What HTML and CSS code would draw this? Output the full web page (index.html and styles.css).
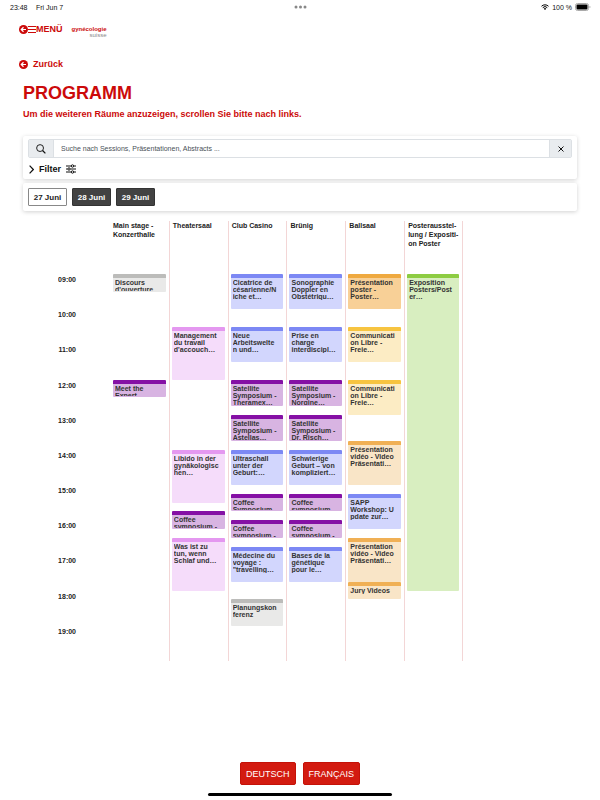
FILE: index.html
```html
<!DOCTYPE html>
<html lang="de">
<head>
    <meta charset="UTF-8">
    <meta name="viewport" content="width=device-width, initial-scale=1.0">
    <title>Programm - gynécologie suisse</title>
    <link rel="stylesheet" href="styles.css">
</head>
<body>
    <div class="status-bar">
        <span class="status-time">23:48</span>
        <span>Fri Jun 7</span>
        <svg class="status-dots" viewBox="0 0 13 4" width="13" height="4"><circle cx="2" cy="2" r="1.5"/><circle cx="6.5" cy="2" r="1.5"/><circle cx="11" cy="2" r="1.5"/></svg>
        <div class="status-right">
            <svg viewBox="0 0 16 12" width="8" height="6" fill="none" stroke="#000" stroke-width="2"><path d="M1 4.5a10 10 0 0 1 14 0M3.5 7.3a6.3 6.3 0 0 1 9 0"/><path d="M8 12L5.500 9.500a3.500 3.500 0 0 1 5 0z" fill="#000" stroke="none"/></svg>
            <span>100 %</span>
            <svg viewBox="0 0 16 8" width="16" height="8"><rect x=".5" y=".5" width="13" height="7" rx="2" fill="#fff" stroke="#aaa"/><rect x="1.500" y="1.500" width="11" height="5" rx="1"/><path d="M14.500 2.700v2.600q1-.4 1-1.300t-1-1.300z" fill="#aaa"/></svg>
        </div>
    </div>

    <header>
        <button class="menu-button">
            <svg viewBox="0 0 18 18" width="9" height="9"><circle cx="9" cy="9" r="9" fill="#cc0a0a"/><path d="M14 9H5M9 4.500L4.500 9 9 13.500" fill="none" stroke="#fff" stroke-width="2.400"/></svg>
            <svg viewBox="0 0 8 8" width="8" height="8"><path d="M0 1.500h8M0 4.500h8M0 7.500h8" stroke="#cc0a0a"/></svg>
            <span>MENÜ</span>
        </button>
        <a href="#" class="logo"><strong>gynécologie</strong><span>suisse</span></a>
    </header>

    <a href="#" class="back-link">
        <svg viewBox="0 0 18 18" width="9" height="9"><circle cx="9" cy="9" r="9" fill="#cc0a0a"/><path d="M14 9H5M9 4.500L4.500 9 9 13.500" fill="none" stroke="#fff" stroke-width="2.400"/></svg>
        Zurück
    </a>

    <main>
        <h1>PROGRAMM</h1>
        <p class="hint">Um die weiteren Räume anzuzeigen, scrollen Sie bitte nach links.</p>

        <div class="card search-card">
            <form class="search">
                <button type="button" aria-label="Suchen"><svg viewBox="0 0 16 16" width="10" height="10" fill="none" stroke="#111" stroke-width="1.500"><circle cx="6.500" cy="6.500" r="5.500"/><path d="M10.500 10.500L15 15" stroke-width="2"/></svg></button>
                <input type="text" aria-label="Suche" placeholder="Suche nach Sessions, Präsentationen, Abstracts ...">
                <button type="reset" aria-label="Löschen"><svg viewBox="0 0 6 6" width="6" height="6"><path d="M.5.5l5 5M5.500.5l-5 5" stroke="#111" stroke-width="1"/></svg></button>
            </form>
            <button class="filter-button">
                <svg viewBox="0 0 5 9" width="5" height="9" fill="none" stroke="#111" stroke-width="1.200"><path d="M.6.6l3.700 3.900L.6 8.400"/></svg>
                Filter
                <svg viewBox="0 0 10 10" width="10" height="10" fill="none" stroke="#111"><path d="M0 2h5M8 2h2M0 5h1.500M4.500 5H10M0 8h5M8 8h2"/><circle cx="6.500" cy="2" r="1.200"/><circle cx="3" cy="5" r="1.200"/><circle cx="6.500" cy="8" r="1.200"/></svg>
            </button>
        </div>

        <div class="card days">
            <button class="day active">27 Juni</button>
            <button class="day">28 Juni</button>
            <button class="day">29 Juni</button>
        </div>

        <div class="schedule" id="schedule">
            <div class="room">
                <h2></h2>
                <div class="hours" id="hours"></div>
            </div>
        </div>
    </main>

    <footer>
        <div class="languages">
            <button>DEUTSCH</button>
            <button>FRANÇAIS</button>
        </div>
        <div class="home-bar"></div>
    </footer>

    <script src="schedule.js"></script>
</body>
</html>
```

FILE: styles.css
```css
* {
    box-sizing: border-box;
}
body {
    font-family: "Liberation Sans", Arial, sans-serif;
    margin: 0;
    min-height: 100vh;
    display: flex;
    flex-direction: column;
    background-color: #fff;
    color: #222;
}
button, input {
    font-family: inherit;
    margin: 0;
}
button {
    cursor: pointer;
}
svg {
    display: block;
    flex: none;
}
a {
    text-decoration: none;
}
.status-bar {
    display: grid;
    grid-template-columns: 26px 1fr auto 1fr;
    align-items: center;
    padding: 0 9px 0 10px;
    height: 14px;
    font-size: 7px;
    color: #111;
}
.status-dots {
    fill: #888;
    margin-right: 26px;
}
.status-right {
    display: flex;
    align-items: center;
    justify-content: flex-end;
    gap: 3px;
}
header {
    display: flex;
    align-items: center;
    gap: 9px;
    height: 30px;
    padding-left: 19px;
}
.menu-button {
    display: flex;
    align-items: center;
    padding: 0;
    border: 0;
    background: none;
    color: #cc0a0a;
    font-size: 9px;
    font-weight: bold;
}
.logo {
    display: flex;
    flex-direction: column;
    align-items: flex-end;
    padding-top: 6px;
    font-size: 6px;
    line-height: 6px;
    color: #888;
}
.logo strong {
    color: #cc0a0a;
}
.back-link {
    display: flex;
    align-items: center;
    gap: 5px;
    margin: 14px 19px 0;
    line-height: 12px;
    font-size: 9px;
    font-weight: bold;
    color: #cc0a0a;
}
main {
    padding: 0 23px;
}
h1 {
    margin: 12px 0 0;
    font-size: 18px;
    line-height: 22px;
    color: #cc0a0a;
}
.hint {
    margin: 4px 0 16px;
    font-size: 9px;
    line-height: 12px;
    font-weight: bold;
    color: #cc0a0a;
}
.card {
    margin-bottom: 4px;
    padding: 3px 5px;
    border-radius: 2px;
    background-color: #fff;
    box-shadow: 0 1px 4px rgba(0, 0, 0, 0.18);
}
.search {
    display: flex;
    height: 19px;
    border: 1px solid #dce0e4;
    border-radius: 2px;
}
.search button {
    display: flex;
    align-items: center;
    justify-content: center;
    width: 24px;
    padding: 0;
    border: 0;
    background-color: #e9ecef;
}
.search button:last-child {
    width: 21px;
}
.search input {
    flex: 1;
    min-width: 0;
    padding: 0 7px;
    border: 0;
    border-left: 1px solid #dce0e4;
    border-right: 1px solid #dce0e4;
    font-size: 7px;
}
.search input::placeholder {
    color: #495057;
}
.filter-button {
    display: flex;
    align-items: center;
    gap: 5px;
    height: 14px;
    margin-top: 4px;
    padding: 0 1px;
    border: 0;
    background: none;
    font-size: 9px;
    font-weight: bold;
    color: #111;
}
.days {
    display: flex;
    gap: 5px;
    padding: 5px;
}
.day {
    width: 39px;
    height: 18px;
    padding: 0;
    border: 1px solid #333;
    border-radius: 1px;
    background-color: #424242;
    color: #fff;
    font-size: 8px;
    font-weight: bold;
}
.day.active {
    background-color: #fff;
    border-color: #888;
    color: #222;
}
.schedule {
    display: grid;
    grid-template-columns: 87px repeat(6, minmax(0, 1fr));
    margin: 10px 114px 0 0;
}
.room + .room + .room {
    border-left: 1px solid #f3d6d6;
}
.room:last-child {
    border-right: 1px solid #f3d6d6;
}
.room h2 {
    height: 53px;
    margin: 0;
    padding: 0 3px;
    font-size: 7px;
    line-height: 9px;
    white-space: nowrap;
}
.slots, .hours {
    display: grid;
    height: 387px;
    padding: 0 3px 0 2px;
}
.room:nth-child(2) .slots {
    padding-left: 3px;
}
/* one row per quarter of an hour, 09:00 to 20:00 */
.slots {
    grid-template-rows: repeat(44, minmax(0, 1fr));
}
.hours {
    grid-template-rows: repeat(11, minmax(0, 1fr));
    padding-right: 34px;
    font-size: 7px;
    line-height: 11px;
    font-weight: bold;
    text-align: right;
}
.session {
    padding: 1px 0 1px 2px;
    border-top: 4px solid;
    border-radius: 1px;
    overflow: hidden;
    display: flex;
    flex-direction: column;
    font-size: 7px;
    line-height: 7px;
    font-weight: bold;
    color: #333;
    white-space: nowrap;
}
.session p {
    margin: 0;
    min-height: 0;
    overflow: hidden;
}
.grey { background-color: #e9e9e8; border-color: #bcbcba; }
.pink { background-color: #f5dcfa; border-color: #e498f0; }
.purple { background-color: #d8b4e2; border-color: #8510a5; }
.blue { background-color: #d2d6fd; border-color: #7c88f4; }
.apricot { background-color: #f8d097; border-color: #efa93f; }
.yellow { background-color: #fcecc4; border-color: #f7c440; }
.orange { background-color: #f9e5c7; border-color: #f0b055; }
.green { background-color: #d8eec0; border-color: #8dcc42; }
footer {
    display: flex;
    flex-direction: column;
    align-items: center;
    gap: 8px;
    margin-top: auto;
    padding-bottom: 4px;
}
.languages {
    display: flex;
    gap: 7px;
}
.languages button {
    height: 23px;
    padding: 0 5px;
    border: 1px solid #c41208;
    border-radius: 2px;
    background-color: #d31b10;
    color: #fff;
    font-size: 9px;
}
.home-bar {
    width: 184px;
    height: 3px;
    border-radius: 2px;
    background-color: #000;
}
```

FILE: schedule.js
```js
// sessions: [first quarter after 09:00, last quarter, colour, title]
const rooms = [
    { name: "Main stage -<br>Konzerthalle", sessions: [
        [0, 2, "grey", "Discours<br>d'ouverture"],
        [12, 14, "purple", "Meet the<br>Expert -"]
    ] },
    { name: "Theatersaal", sessions: [
        [6, 12, "pink", "Management<br>du travail<br>d'accouch…"],
        [20, 26, "pink", "Libido in der<br>gynäkologisc<br>hen…"],
        [27, 29, "purple", "Coffee<br>symposium -"],
        [30, 36, "pink", "Was ist zu<br>tun, wenn<br>Schlaf und…"]
    ] },
    { name: "Club Casino", sessions: [
        [0, 4, "blue", "Cicatrice de<br>césarienne/N<br>iche et…"],
        [6, 10, "blue", "Neue<br>Arbeitswelte<br>n und…"],
        [12, 15, "purple", "Satellite<br>Symposium -<br>Theramex…"],
        [16, 19, "purple", "Satellite<br>Symposium -<br>Astellas…"],
        [20, 24, "blue", "Ultraschall<br>unter der<br>Geburt:…"],
        [25, 27, "purple", "Coffee<br>Symposium -"],
        [28, 30, "purple", "Coffee<br>symposium -"],
        [31, 35, "blue", "Médecine du<br>voyage :<br>\"travelling…"],
        [37, 40, "grey", "Planungskon<br>ferenz"]
    ] },
    { name: "Brünig", sessions: [
        [0, 4, "blue", "Sonographie<br>Doppler en<br>Obstétriqu…"],
        [6, 10, "blue", "Prise en<br>charge<br>interdiscipl…"],
        [12, 15, "purple", "Satellite<br>Symposium -<br>Norgine…"],
        [16, 19, "purple", "Satellite<br>Symposium -<br>Dr. Risch…"],
        [20, 24, "blue", "Schwierige<br>Geburt – von<br>kompliziert…"],
        [25, 27, "purple", "Coffee<br>symposium -"],
        [28, 30, "purple", "Coffee<br>symposium -"],
        [31, 35, "blue", "Bases de la<br>génétique<br>pour le…"]
    ] },
    { name: "Ballsaal", sessions: [
        [0, 4, "apricot", "Présentation<br>poster -<br>Poster…"],
        [6, 10, "yellow", "Communicati<br>on Libre -<br>Freie…"],
        [12, 16, "yellow", "Communicati<br>on Libre -<br>Freie…"],
        [19, 24, "orange", "Présentation<br>vidéo - Video<br>Präsentati…"],
        [25, 29, "blue", "SAPP<br>Workshop: U<br>pdate zur…"],
        [30, 35, "orange", "Présentation<br>vidéo - Video<br>Präsentati…"],
        [35, 37, "orange", "Jury Videos"]
    ] },
    { name: "Posterausstel-<br>lung / Expositi-<br>on Poster", sessions: [
        [0, 36, "green", "Exposition<br>Posters/Post<br>er…"]
    ] }
];

const hours = document.getElementById("hours");
for (let hour = 9; hour < 20; hour++) {
    hours.innerHTML += `<span>${String(hour).padStart(2, "0")}:00</span>`;
}

const schedule = document.getElementById("schedule");
rooms.forEach(room => {
    const sessions = room.sessions.map(([start, end, color, title]) => `
        <div class="session ${color}" style="grid-row: ${start + 1} / ${end + 1}"><p>${title}</p></div>
    `).join("");
    schedule.innerHTML += `
        <section class="room">
            <h2>${room.name}</h2>
            <div class="slots">${sessions}</div>
        </section>
    `;
});
```
